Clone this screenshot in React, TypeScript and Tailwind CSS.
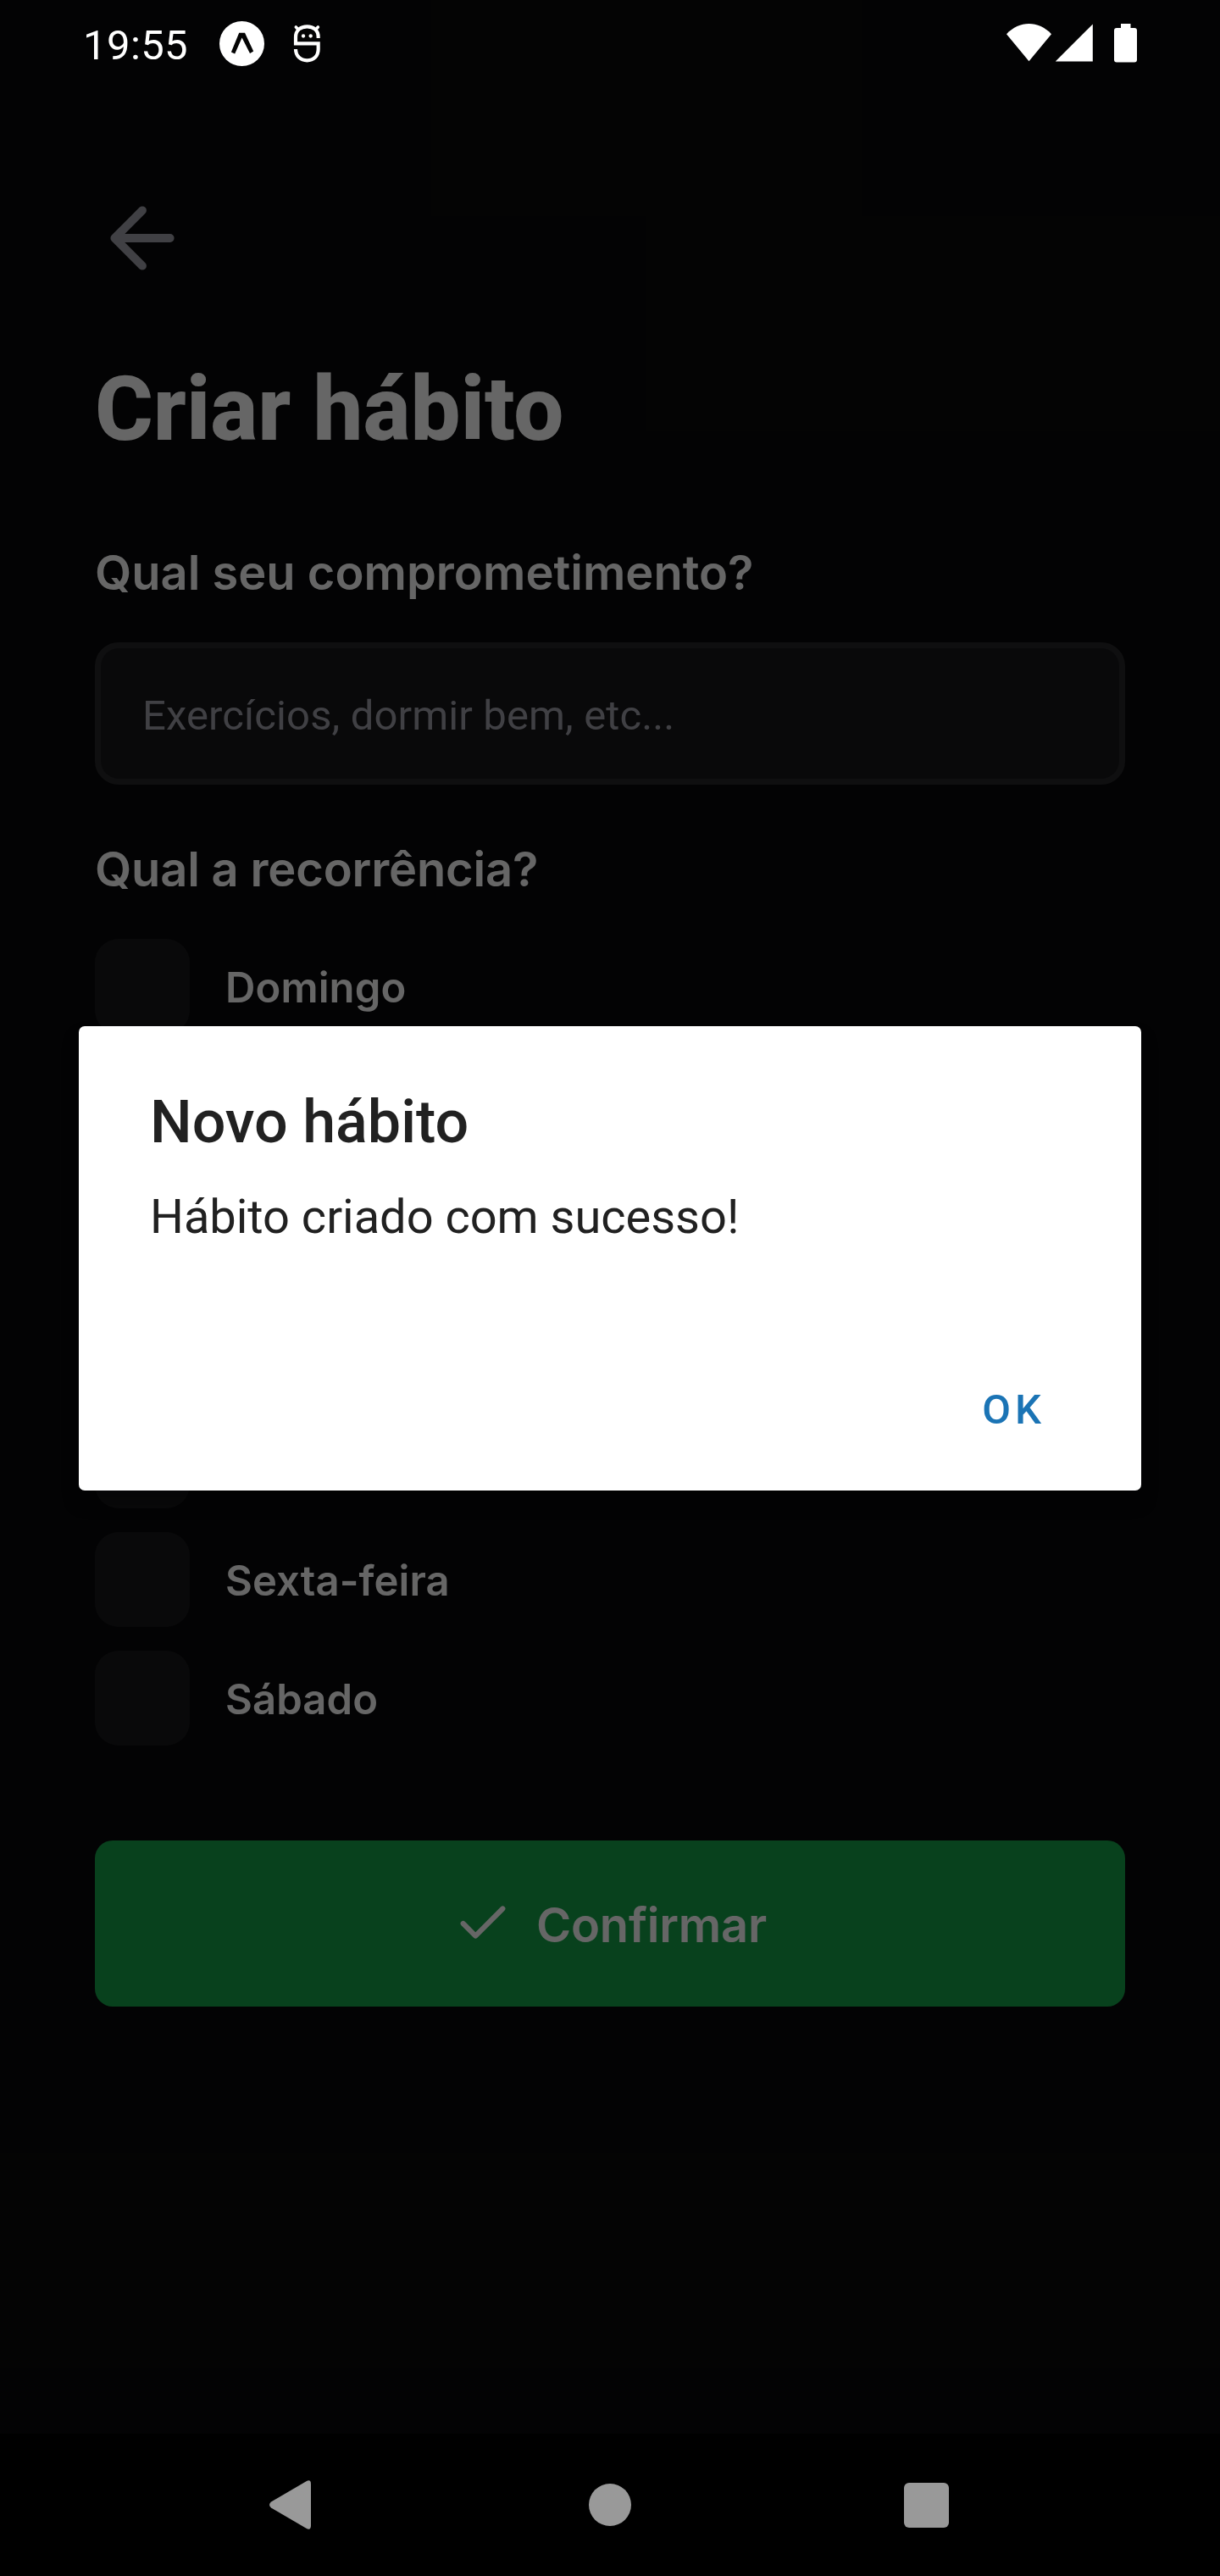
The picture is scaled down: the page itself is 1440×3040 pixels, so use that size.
import React from "react";

const days = [
  "Domingo",
  "Segunda-feira",
  "Terça-feira",
  "Quarta-feira",
  "Quinta-feira",
  "Sexta-feira",
  "Sábado",
];

function StatusBar() {
  return (
    <div className="relative z-20 flex h-[104px] justify-between pl-[98px] pr-[98px] font-['Roboto',sans-serif] text-white">
      <div className="flex items-start">
        <span className="mt-[25px] w-[161px] whitespace-nowrap text-[49px] leading-[57px] tracking-[0.4px]">19:55</span>
        <svg className="mt-[25px]" width="53" height="53" viewBox="0 0 53 53">
          <circle cx="26.5" cy="26.5" r="26.5" fill="#fff" />
          <path d="M23.2 13.8h6.8L40.2 35.500l-4.200 2.600-9.400-18.600-8.400 18.900-4.300-2z" fill="#040404" />
        </svg>
        <svg className="ml-[33px] mt-[27px]" width="35" height="48" viewBox="795 81 105 144" fill="none" stroke="#fff">
          <path
            d="M887 135v-4c0-24-17-37-39.500-37S807 107 807 131v23h80v20c0 25-17 40-39.500 40S807 199 807 174"
            strokeWidth="12.500"
          />
          <path d="M808 96l9 9M886 96l-9 9" strokeWidth="11" strokeLinecap="round" />
          <circle cx="834" cy="127.500" r="6.500" fill="#fff" stroke="none" />
          <circle cx="860" cy="127.500" r="6.500" fill="#fff" stroke="none" />
        </svg>
      </div>
      <div className="flex items-start">
        <svg className="mt-[28px]" width="53" height="45" viewBox="0 0 53 45" fill="#fff">
          <path d="M0 12.300C15-4 38-4 53 12.300L26.500 44.300z" />
        </svg>
        <svg className="ml-[5px] mt-[28px]" width="44" height="45" viewBox="0 0 44 45" fill="#fff">
          <path d="M43.800 .5v44H-.2z" />
        </svg>
        <svg className="ml-[25px] mt-[28px]" width="27" height="46" viewBox="0 0 27 46" fill="#fff">
          <path d="M8 0h11.500v5H24a3 3 0 0 1 3 3v34.500a3 3 0 0 1-3 3H3a3 3 0 0 1-3-3V8a3 3 0 0 1 3-3h5z" />
        </svg>
      </div>
    </div>
  );
}

function HabitForm() {
  return (
    <div className="flex flex-col px-[112px] pt-[121px] font-['Inter',sans-serif] font-semibold text-white">
      <svg width="112" height="112" viewBox="0 0 24 24" fill="none" stroke="#a1a1aa" strokeWidth="2.100" strokeLinecap="round" strokeLinejoin="round">
        <path d="M19 12H5M12 19l-7-7 7-7" />
      </svg>
      <h1 className="mt-[85px] font-['Roboto',sans-serif] text-[105px] font-extrabold leading-[123px]">Criar hábito</h1>
      <p className="mt-[97px] text-[56px] leading-[68px]">Qual seu comprometimento?</p>
      <div className="mt-12 flex h-[168px] items-center rounded-[28px] border-[7px] border-[#27272a] bg-[#18181b] px-[49px] pt-[5px] font-['Roboto',sans-serif] text-[49px] font-normal leading-[57px] tracking-[0.12px] text-[#a1a1aa]">
        Exercícios, dormir bem, etc...
      </div>
      <p className="mt-[66px] text-[56px] leading-[68px] tracking-[-0.18px]">Qual a recorrência?</p>
      <div className="mt-12 flex flex-col gap-7">
        {days.map((day) => (
          <div key={day} className="flex items-center gap-[42px]">
            <div className="size-[112px] rounded-[28px] bg-[#18181b]" />
            <span className="pt-[3px] text-[49px] leading-[59px] tracking-[0.1px]">{day}</span>
          </div>
        ))}
      </div>
      <div className="mt-[112px] flex h-[196px] items-center justify-center gap-7 rounded-[21px] bg-[#16a34a]">
        <svg width="70" height="70" viewBox="0 0 24 24" fill="none" stroke="#fff" strokeWidth="2.100" strokeLinecap="round" strokeLinejoin="round">
          <path d="M20 6L9 17l-5-5" />
        </svg>
        <span className="pt-1 text-[56px] leading-[68px] tracking-[-0.2px]">Confirmar</span>
      </div>
    </div>
  );
}

function Alert() {
  return (
    <div className="absolute inset-0 z-10 flex items-center justify-center bg-black/60 pb-[70px] font-['Roboto',sans-serif] text-[#212121]">
      <div className="flex h-[548px] w-[1254px] flex-col rounded-[7px] bg-white pl-[84px] pr-[113px] pt-[72px] shadow-[0_14px_20px_rgba(0,0,0,0.3)]">
        <h2 className="text-[70px] font-medium leading-[82px]">Novo hábito</h2>
        <p className="mt-[38px] text-[56px] leading-[66px] tracking-[-0.03px]">Hábito criado com sucesso!</p>
        <button className="mt-[166px] self-end text-[49px] font-medium leading-[57px] tracking-[5px] text-[#1b74b5]">OK</button>
      </div>
    </div>
  );
}

function NavBar() {
  return (
    <div className="relative z-20 flex h-[168px] items-center justify-between bg-black pl-[318px] pr-[320px]">
      <svg width="49" height="58" viewBox="0 0 49 58" fill="#999">
        <path d="M43.500 1.200Q49-1.500 49 4.500V53.500Q49 59.500 43.500 56.800L2 32.500Q-2 29 2 25.500z" />
      </svg>
      <div className="ml-[6px] size-[50px] rounded-full bg-[#999]" />
      <div className="size-[53px] rounded-[6px] bg-[#999]" />
    </div>
  );
}

export default function App() {
  return (
    <div className="relative flex h-[3040px] w-[1440px] flex-col justify-between overflow-hidden bg-[#09090a]">
      <div>
        <StatusBar />
        <HabitForm />
      </div>
      <Alert />
      <NavBar />
    </div>
  );
}
